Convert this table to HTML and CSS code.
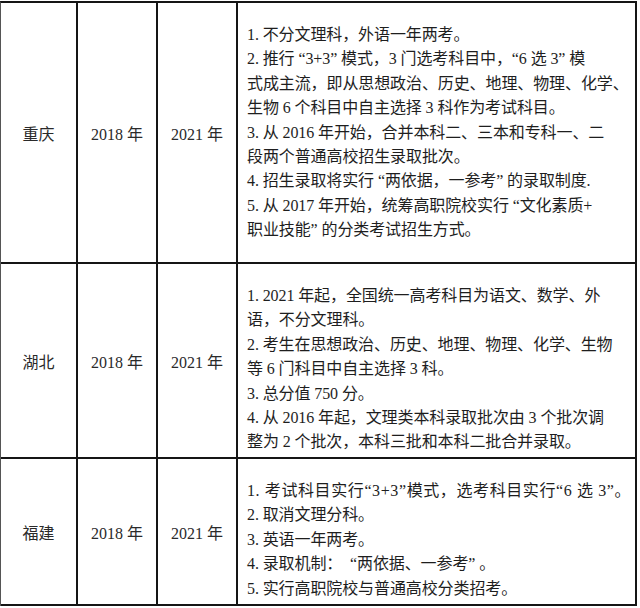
FILE: index.html
```html
<!DOCTYPE html>
<html lang="zh">
<head>
<meta charset="utf-8">
<link rel="stylesheet" href="styles.css">
</head>
<body>
<div class="table">
  <div class="cell side">重庆</div>
  <div class="cell side">2018 年</div>
  <div class="cell side">2021 年</div>
  <div class="cell detail">
    <p>1. 不分文理科，外语一年两考。</p>
    <p>2. 推行 “3+3” 模式，3 门选考科目中，“6 选 3” 模<br>式成主流，即从思想政治、历史、地理、物理、化学、<br>生物 6 个科目中自主选择 3 科作为考试科目。</p>
    <p>3. 从 2016 年开始，合并本科二、三本和专科一、二<br>段两个普通高校招生录取批次。</p>
    <p>4. 招生录取将实行 “两依据，一参考” 的录取制度.</p>
    <p>5. 从 2017 年开始，统筹高职院校实行 “文化素质+<br>职业技能” 的分类考试招生方式。</p>
  </div>

  <div class="cell side">湖北</div>
  <div class="cell side">2018 年</div>
  <div class="cell side">2021 年</div>
  <div class="cell detail">
    <p>1. 2021 年起，全国统一高考科目为语文、数学、外<br>语，不分文理科。</p>
    <p>2. 考生在思想政治、历史、地理、物理、化学、生物<br>等 6 门科目中自主选择 3 科。</p>
    <p>3. 总分值 750 分。</p>
    <p>4. 从 2016 年起，文理类本科录取批次由 3 个批次调<br>整为 2 个批次，本科三批和本科二批合并录取。</p>
  </div>

  <div class="cell side">福建</div>
  <div class="cell side">2018 年</div>
  <div class="cell side">2021 年</div>
  <div class="cell detail">
    <p class="wide">1. 考试科目实行“3+3”模式，选考科目实行“6 选 3”。</p>
    <p>2. 取消文理分科。</p>
    <p>3. 英语一年两考。</p>
    <p>4. 录取机制：&nbsp; “两依据、一参考” 。</p>
    <p>5. 实行高职院校与普通高校分类招考。</p>
  </div>
</div>
</body>
</html>
```

FILE: styles.css
```css
html, body {
  margin: 0;
  padding: 0;
  background: #ffffff;
}

body {
  padding-top: 1px;
  font-family: "Liberation Serif", "Noto Sans CJK SC", serif;
  font-size: 16px;
  color: #1e1e1e;
}

.table {
  display: grid;
  grid-template-columns: 77px 80px 80px 399px;
  grid-template-rows: 261px 195px 147px;
  width: 637px;
  border-top: 2px solid #151515;
  border-left: 1px solid #555555;
  box-sizing: border-box;
}

.cell {
  box-sizing: border-box;
  border-right: 2px solid #151515;
  border-bottom: 2px solid #151515;
}

.side {
  display: flex;
  align-items: center;
  justify-content: center;
  font-size: 16px;
  color: #2a2a2a;
}

.detail {
  padding: 20px 0 0 9px;
  line-height: 24.4px;
  white-space: nowrap;
  letter-spacing: -0.1px;
}

.detail p {
  margin: 0;
}

.detail p.wide {
  letter-spacing: 0.6px;
}
```
